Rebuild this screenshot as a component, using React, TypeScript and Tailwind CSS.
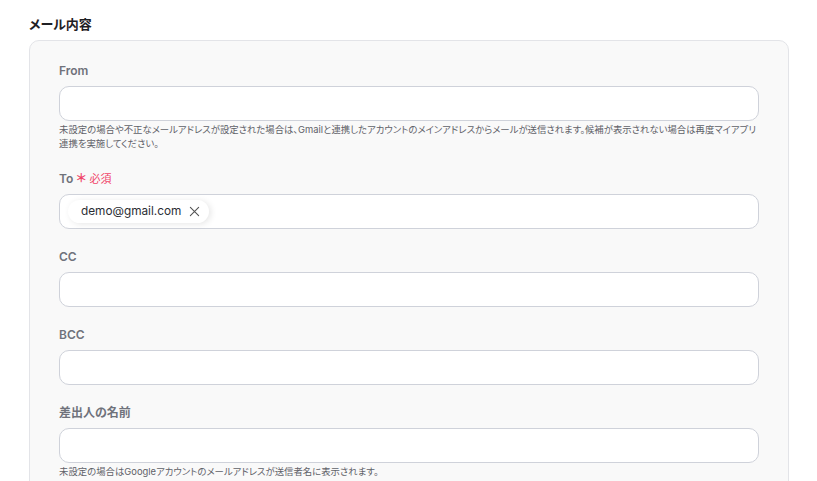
import React from "react";

interface FieldProps {
  label: React.ReactNode;
  help?: string;
  children?: React.ReactNode;
}

const Field: React.FC<FieldProps> = ({ label, help, children }) => {
  return (
    <div className="mb-[18px] last:mb-0">
      <div className="mb-[5px] text-[12px] font-semibold leading-5 text-[#6f727b]">{label}</div>
      <div className="flex h-[35px] w-full items-center rounded-[10px] border border-[#cfd2da] bg-white px-[8px]">
        {children}
      </div>
      {help && (
        <p className="mt-[2px] text-[9.4px] leading-[14px] text-[#5f6168]">{help}</p>
      )}
    </div>
  );
};

const Chip: React.FC<{ value: string }> = ({ value }) => (
  <span className="flex h-[23px] items-center gap-[8px] rounded-full bg-white pl-[13px] pr-[9px] text-[11.8px] text-[#2b2d33] shadow-[2px_1px_6px_rgba(0,0,0,0.10)]">
    {value}
    <svg width="11" height="11" viewBox="0 0 12 12" fill="none" stroke="#555" strokeWidth="1.2" strokeLinecap="round">
      <path d="M1.5 1.5l9 9M10.5 1.5l-9 9" />
    </svg>
  </span>
);

export default function App() {
  return (
    <div className="min-h-screen bg-white px-[29px] pt-[14px] font-['Inter','Noto_Sans_CJK_JP',sans-serif] [font-feature-settings:'palt']">
      <h2 className="mb-[6px] text-[13px] font-bold leading-5 text-[#1f2024]">メール内容</h2>
      <div className="w-[760px] rounded-t-[10px] border border-[#e3e4e8] bg-[#f9f9f9] px-[29px] pb-[20px] pt-[20px]">
        <Field
          label="From"
          help="未設定の場合や不正なメールアドレスが設定された場合は、Gmailと連携したアカウントのメインアドレスからメールが送信されます。候補が表示されない場合は再度マイアプリ連携を実施してください。"
        />
        <Field
          label={
            <span>
              To{" "}
              <span className="font-normal text-[#f0466a]">
                <span className="font-bold">＊</span> <span className="text-[11px]">必須</span>
              </span>
            </span>
          }
        >
          <Chip value="demo@gmail.com" />
        </Field>
        <Field label="CC" />
        <Field label="BCC" />
        <Field
          label="差出人の名前"
          help="未設定の場合はGoogleアカウントのメールアドレスが送信者名に表示されます。"
        />
      </div>
    </div>
  );
}
